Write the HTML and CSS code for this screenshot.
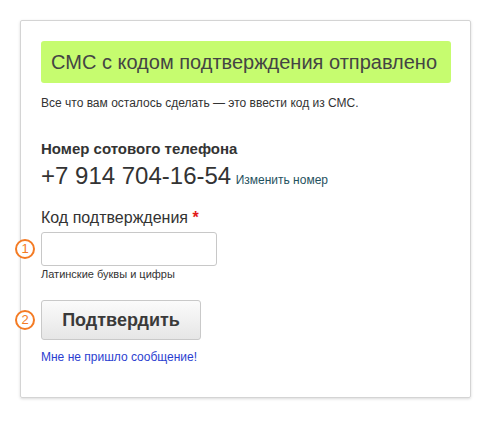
FILE: index.html
```html
<!DOCTYPE html>
<html lang="ru">
<head>
<meta charset="utf-8">
<link rel="stylesheet" href="styles.css">
</head>
<body>
<div class="card">
  <div class="banner">СМС с кодом подтверждения отправлено</div>
  <p class="intro">Все что вам осталось сделать — это ввести код из СМС.</p>
  <div class="phone-block">
    <div class="phone-label">Номер сотового телефона</div>
    <div class="phone-row"><span class="phone">+7 914 704-16-54</span> <a class="change" href="#">Изменить номер</a></div>
  </div>
  <div class="field">
    <label class="field-label">Код подтверждения <span class="req">*</span></label>
    <div class="step-row">
      <span class="step">1</span>
      <input class="code-input" type="text">
    </div>
    <div class="hint">Латинские буквы и цифры</div>
  </div>
  <div class="step-row btn-row">
    <span class="step">2</span>
    <button class="btn" type="button">Подтвердить</button>
  </div>
  <a class="resend" href="#">Мне не пришло сообщение!</a>
</div>
</body>
</html>
```
FILE: styles.css
```css
html, body {
  margin: 0;
  padding: 0;
  background: #fff;
}
body {
  font-family: "Liberation Sans", Arial, sans-serif;
  color: #333;
  padding: 20px;
}
.card {
  box-sizing: border-box;
  width: 451px;
  height: 378px;
  border: 1px solid #d4d4d4;
  border-radius: 2px;
  box-shadow: 0 1px 3px rgba(0,0,0,0.15);
  padding: 20px 19px 20px 20px;
  position: relative;
}
.banner {
  background: #c6fc6f;
  border-radius: 3px;
  height: 42px;
  line-height: 42px;
  padding-left: 10px;
  font-size: 20px;
  color: #444;
}
.intro {
  margin: 12px 0 0;
  font-size: 12px;
  line-height: 16px;
  color: #333;
}
.phone-block {
  margin-top: 29px;
}
.phone-label {
  font-size: 15px;
  font-weight: bold;
  line-height: 18px;
  color: #333;
}
.phone-row {
  margin-top: 4px;
  line-height: 28px;
}
.phone {
  font-size: 24px;
  color: #333;
}
.change {
  font-size: 12px;
  color: #1f5160;
  text-decoration: none;
}
.field {
  margin-top: 14px;
}
.field-label {
  display: block;
  font-size: 16px;
  line-height: 20px;
  color: #333;
}
.req {
  color: #e21b1b;
  font-weight: bold;
}
.step-row {
  position: relative;
  margin-top: 4px;
}
.step {
  position: absolute;
  left: -26px;
  top: 50%;
  margin-top: -10px;
  box-sizing: border-box;
  width: 20px;
  height: 20px;
  border: 2px solid #f47b24;
  border-radius: 50%;
  background: #fff;
  color: #f47b24;
  font-size: 13px;
  line-height: 16px;
  text-align: center;
}
.code-input {
  display: block;
  box-sizing: border-box;
  width: 176px;
  height: 34px;
  border: 1px solid #c8c8c8;
  border-radius: 3px;
  margin: 0;
  padding: 0 6px;
  font: inherit;
}
.hint {
  margin-top: 1px;
  font-size: 11px;
  line-height: 14px;
  color: #333;
}
.btn-row {
  margin-top: 19px;
}
.btn {
  display: block;
  box-sizing: border-box;
  width: 160px;
  height: 40px;
  margin: 0;
  border: 1px solid #c9c9c9;
  border-radius: 3px;
  background: linear-gradient(#fbfbfb, #e6e6e6);
  font-family: "Liberation Sans", Arial, sans-serif;
  font-size: 18px;
  font-weight: bold;
  color: #3a3a3a;
  padding: 0;
}
.resend {
  display: inline-block;
  margin-top: 9px;
  font-size: 12px;
  line-height: 16px;
  color: #2b3ed0;
  text-decoration: none;
}
```
